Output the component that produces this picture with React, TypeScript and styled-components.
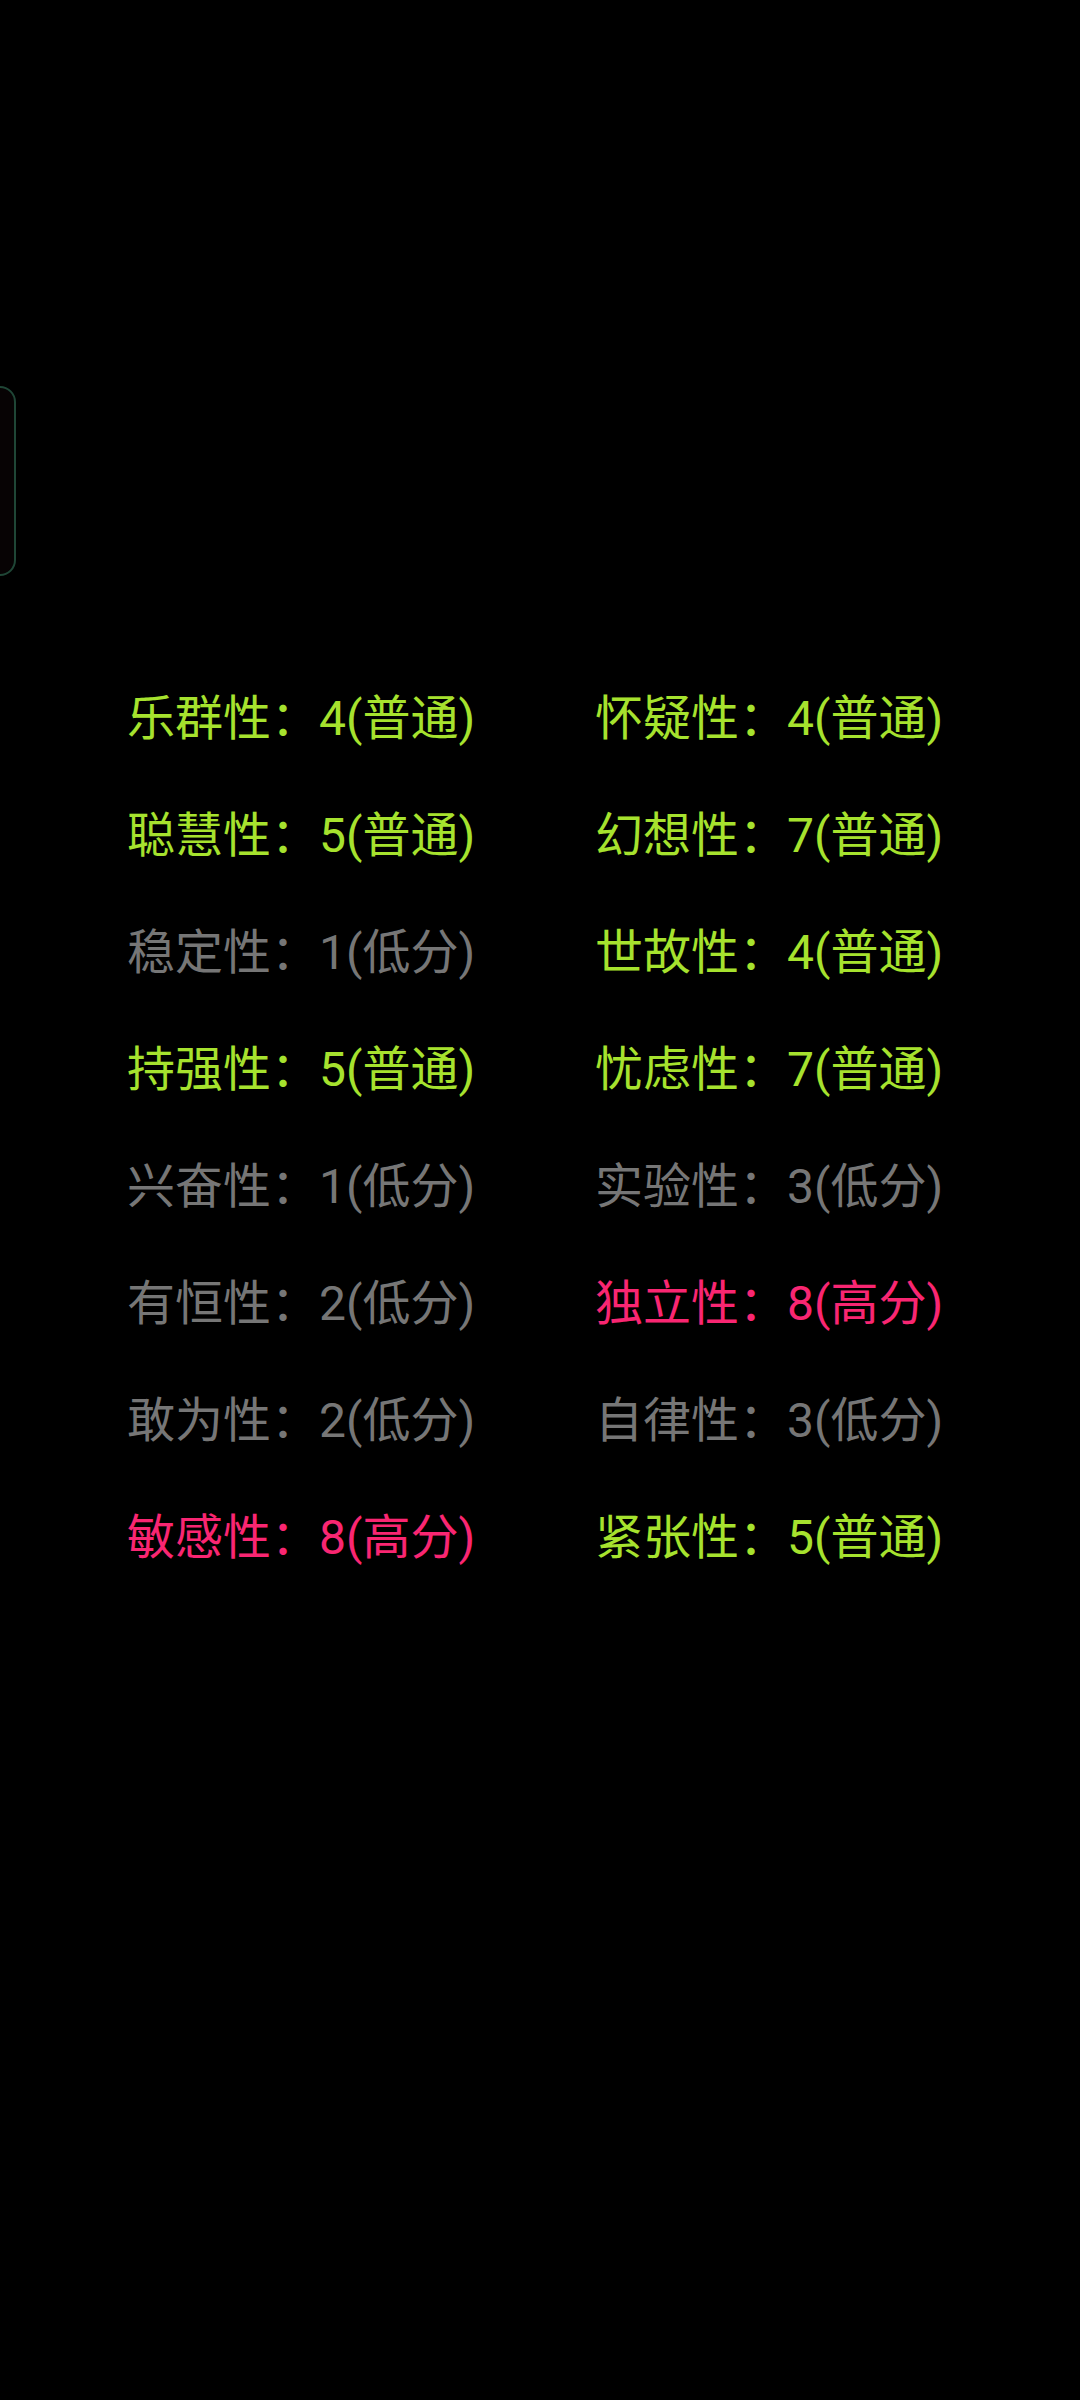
import React from "react";
import styled, { createGlobalStyle } from "styled-components";

const Global = createGlobalStyle`
  html, body { margin: 0; padding: 0; background: #000; }
  body { width: 1080px; height: 2400px; overflow: hidden; }
`;

const Screen = styled.div`
  position: relative;
  width: 1080px;
  height: 2400px;
  background: #000;
  font-family: Roboto, "Noto Sans CJK SC", sans-serif;
`;

const Handle = styled.div`
  position: absolute;
  left: -20px;
  top: 386px;
  width: 32px;
  height: 186px;
  border: 2px solid #1f4636;
  border-radius: 16px;
  background: #070304;
`;

const Grid = styled.div`
  display: grid;
  grid-template-columns: 468px 468px;
  grid-auto-rows: 117px;
  align-items: center;
  padding: 660px 0 0 127px;
`;

type Level = "mid" | "low" | "high";

const colors: Record<Level, string> = {
  mid: "#a6e22e",
  low: "#767676",
  high: "#f92672",
};

const Trait = styled.div<{ $level: Level }>`
  font-size: 48px;
  line-height: 117px;
  white-space: nowrap;
  color: ${(p) => colors[p.$level]};
`;

const items: { name: string; score: number; level: Level }[] = [
  { name: "乐群性", score: 4, level: "mid" },
  { name: "怀疑性", score: 4, level: "mid" },
  { name: "聪慧性", score: 5, level: "mid" },
  { name: "幻想性", score: 7, level: "mid" },
  { name: "稳定性", score: 1, level: "low" },
  { name: "世故性", score: 4, level: "mid" },
  { name: "持强性", score: 5, level: "mid" },
  { name: "忧虑性", score: 7, level: "mid" },
  { name: "兴奋性", score: 1, level: "low" },
  { name: "实验性", score: 3, level: "low" },
  { name: "有恒性", score: 2, level: "low" },
  { name: "独立性", score: 8, level: "high" },
  { name: "敢为性", score: 2, level: "low" },
  { name: "自律性", score: 3, level: "low" },
  { name: "敏感性", score: 8, level: "high" },
  { name: "紧张性", score: 5, level: "mid" },
];

const label: Record<Level, string> = { mid: "普通", low: "低分", high: "高分" };

export default function App() {
  return (
    <Screen>
      <Global />
      <Handle />
      <Grid>
        {items.map((it) => (
          <Trait key={it.name} $level={it.level}>
            {it.name}：{it.score}({label[it.level]})
          </Trait>
        ))}
      </Grid>
    </Screen>
  );
}
